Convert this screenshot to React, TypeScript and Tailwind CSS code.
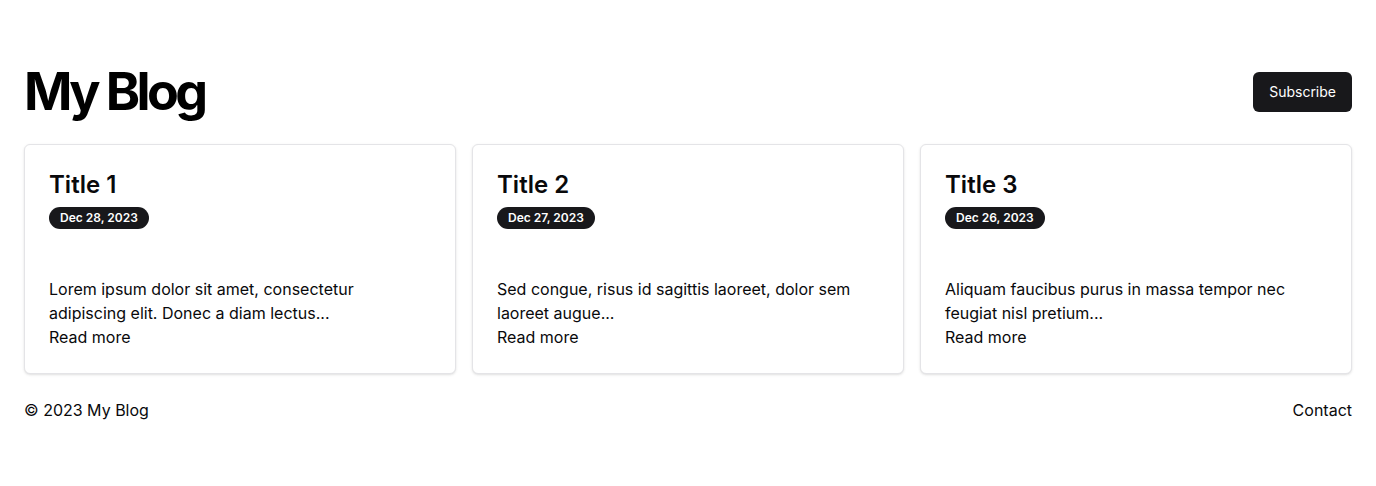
const posts = [
  {
    title: "Title 1",
    date: "Dec 28, 2023",
    excerpt: "Lorem ipsum dolor sit amet, consectetur adipiscing elit. Donec a diam lectus...",
  },
  {
    title: "Title 2",
    date: "Dec 27, 2023",
    excerpt: "Sed congue, risus id sagittis laoreet, dolor sem laoreet augue...",
  },
  {
    title: "Title 3",
    date: "Dec 26, 2023",
    excerpt: "Aliquam faucibus purus in massa tempor nec feugiat nisl pretium...",
  },
]

type PostCardProps = {
  title: string,
  date: string,
  excerpt: string
}

const PostCard = ({ title, date, excerpt }: PostCardProps) => {
  return (
    <div className="flex flex-col rounded-md border border-[#e4e4e7] bg-white shadow-sm">
      <div className="flex flex-col gap-1.5 p-6">
        <h2 className="text-2xl font-semibold leading-8">{title}</h2>
        <div className="flex">
          <span className="inline-flex rounded-full border border-transparent bg-[#18181b] px-2.5 py-0.5 text-xs leading-4 font-semibold text-white">
            {date}
          </span>
        </div>
      </div>
      <div className="p-6">
        <p className="text-base leading-6">{excerpt}</p>
        <a href="#" className="text-base leading-6">Read more</a>
      </div>
    </div>
  )
}

export default function App() {
  return (
    <div className="min-h-[486px] bg-white px-6 pt-[64px] text-[#09090b] font-['Inter',sans-serif]">
      <header className="flex items-center justify-between">
        <h1 className="text-[52px] font-bold leading-[56px] tracking-[-0.07em] text-black">My Blog</h1>
        <button className="h-10 rounded-md bg-[#18181b] px-4 text-sm font-normal text-white">Subscribe</button>
      </header>
      <main className="mt-6 grid grid-cols-3 gap-4">
        {posts.map((post, index) => (
          <PostCard key={`post-${index}`} {...post} />
        ))}
      </main>
      <footer className="flex items-center justify-between py-6 text-base">
        <span>© 2023 My Blog</span>
        <a href="#">Contact</a>
      </footer>
    </div>
  )
}
